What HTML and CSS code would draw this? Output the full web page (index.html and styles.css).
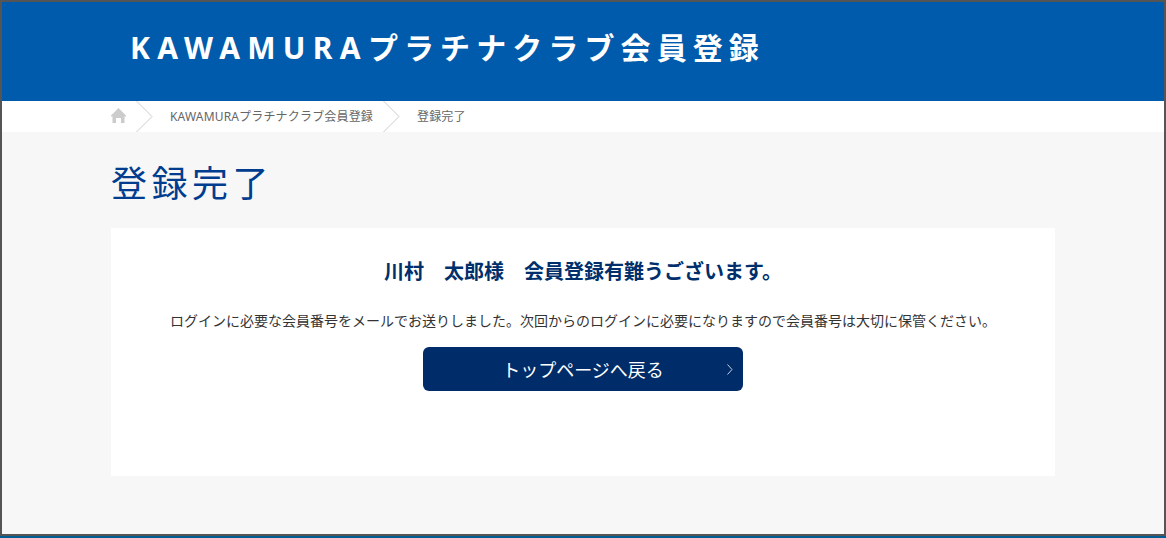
FILE: index.html
```html
<!DOCTYPE html>
<html lang="ja">
<head>
  <meta charset="UTF-8" />
  <meta name="viewport" content="width=device-width, initial-scale=1.0"/>
  <title>登録完了</title>
  <link rel="stylesheet" href="styles.css">
</head>
<body>
  <div class="window">
    <header class="site-header">
      <div class="site-title"><span class="latin">KAWAMURA</span>プラチナクラブ会員登録</div>
    </header>
    <nav class="breadcrumb">
      <div class="breadcrumb-inner">
        <svg class="home-icon" viewBox="0 0 15 15" width="15" height="15">
          <path d="M7.5 0 L15 7.5 L15 8.5 L13.5 8.5 L13.5 15 L10 15 L10 10 L5 10 L5 15 L1.5 15 L1.5 8.5 L0 8.5 L0 7.5 Z" fill="#ccc"/>
        </svg>
        <svg class="crumb-sep" viewBox="0 0 17 31" width="17" height="31">
          <path d="M0.5 0 L16 15.5 L0.5 31" fill="none" stroke="#ccc"/>
        </svg>
        <span class="crumb">KAWAMURAプラチナクラブ会員登録</span>
        <svg class="crumb-sep" viewBox="0 0 17 31" width="17" height="31">
          <path d="M0.5 0 L16 15.5 L0.5 31" fill="none" stroke="#ccc"/>
        </svg>
        <span class="crumb">登録完了</span>
      </div>
    </nav>
    <main class="content">
      <h1>登録完了</h1>
      <section class="card">
        <h2>川村　太郎様　会員登録有難うございます。</h2>
        <p>ログインに必要な会員番号をメールでお送りしました。次回からのログインに必要になりますので会員番号は大切に保管ください。</p>
        <a class="btn" href="#">
          トップページへ戻る
          <svg class="btn-arrow" viewBox="0 0 6 11" width="6" height="11">
            <path d="M0.5 0.5 L5 5.5 L0.5 10.5" fill="none" stroke="#c5cfe0"/>
          </svg>
        </a>
      </section>
    </main>
  </div>
  <div class="bottom-bar"></div>
</body>
</html>
```

FILE: styles.css
```css
* {
  margin: 0;
  padding: 0;
  box-sizing: border-box;
  font-family: "Noto Sans", "Noto Sans CJK JP", sans-serif;
}

body {
  background: #fff;
  width: 1166px;
  height: 538px;
  overflow: hidden;
}

.window {
  width: 1166px;
  height: 536px;
  border: 2px solid #555;
  background: #f7f7f7;
  display: flex;
  flex-direction: column;
}

.bottom-bar {
  height: 2px;
  background: #005e94;
}

.site-header {
  height: 99px;
  background: #005bac;
  padding: 26px 0 0 128px;
}

.site-title {
  color: #fff;
  font-size: 30px;
  line-height: 40px;
  font-weight: 700;
  letter-spacing: 6.1px;
}

.latin {
  letter-spacing: 7.3px;
}

.breadcrumb {
  height: 31px;
  background: #fff;
}

.breadcrumb-inner {
  display: flex;
  align-items: center;
  height: 31px;
  padding-left: 109px;
}

.home-icon {
  margin: 0 10px 3px 0;
}

.crumb-sep {
  flex-shrink: 0;
}

.crumb {
  font-size: 12px;
  letter-spacing: 0.17px;
  color: #666;
  margin: 0 10px 1px 17px;
}

.content {
  padding: 0 109px;
}

h1 {
  font-size: 36px;
  line-height: 52px;
  font-weight: 400;
  color: #003d8f;
  letter-spacing: 4.5px;
  padding-top: 26px;
  height: 96px;
}

.card {
  width: 944px;
  height: 248px;
  background: #fff;
  padding-top: 30px;
  display: flex;
  flex-direction: column;
  align-items: center;
}

h2 {
  font-size: 20px;
  line-height: 28px;
  color: #002f6c;
  font-weight: 700;
}

.card p {
  font-size: 14px;
  line-height: 20px;
  color: #333;
  margin-top: 25px;
}

.btn {
  position: relative;
  display: block;
  width: 320px;
  height: 44px;
  margin-top: 16px;
  background: #002d69;
  border-radius: 6px;
  color: #fff;
  font-size: 18px;
  line-height: 46px;
  text-align: center;
  text-decoration: none;
}

.btn-arrow {
  position: absolute;
  right: 10px;
  top: 17px;
}
```
